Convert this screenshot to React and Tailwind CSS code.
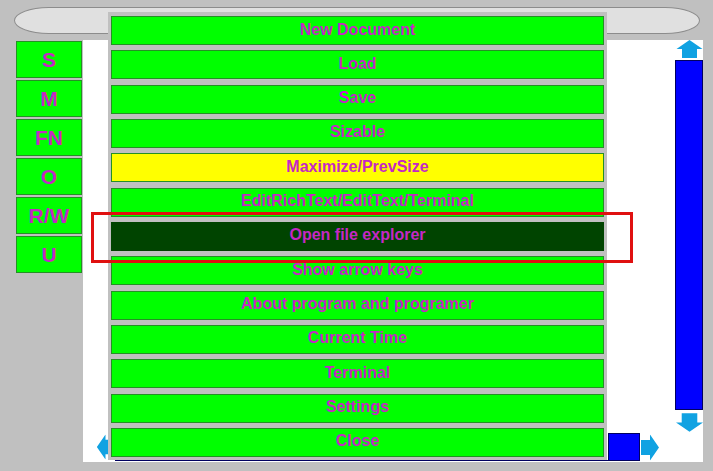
import React from 'react';

const menuItems = [
  { label: 'New Document' },
  { label: 'Load' },
  { label: 'Save' },
  { label: 'Sizable' },
  { label: 'Maximize/PrevSize', tone: 'yellow' },
  { label: 'EditRichText/EditText/Terminal' },
  { label: 'Open file explorer', tone: 'dark' },
  { label: 'Show arrow keys' },
  { label: 'About program and programer' },
  { label: 'Current Time' },
  { label: 'Terminal' },
  { label: 'Settings' },
  { label: 'Close' },
];

const sideKeys = ['S', 'M', 'FN', 'O', 'R/W', 'U'];

function Arrow({ dir, className }) {
  // drawn pointing up, rotated for the other directions
  const rot = { up: 0, right: 90, down: 180, left: 270 }[dir];
  return (
    <svg viewBox="0 0 26 18" className={className} style={{ transform: `rotate(${rot}deg)` }}>
      <path d="M13 0 L26 9 L20.5 9 L20.5 18 L5.5 18 L5.5 9 L0 9 Z" fill="#10a2e2" />
    </svg>
  );
}

function MenuButton({ label, tone }) {
  let cls = 'bg-[#00ff00] border border-[#259025]';
  if (tone === 'yellow') cls = 'bg-[#ffff00] border border-[#259025]';
  if (tone === 'dark') cls = 'bg-[#004400]';
  return (
    <div className={`h-[29px] flex items-center justify-center pb-[2px] text-[16px] font-bold text-[#c428c4] ${cls}`}>
      {label}
    </div>
  );
}

export default function App() {
  return (
    <div
      className="relative w-[713px] h-[471px] overflow-hidden bg-[#c0c0c0]"
      style={{ fontFamily: '"Liberation Sans", Arial, sans-serif' }}
    >
      {/* top title pill */}
      <div className="ml-[14px] mt-[7px] w-[686px] h-[27px] rounded-[36px/14px] bg-[#e0e0e0] border border-[#8c8c8c]" />

      <div className="flex items-start mt-[6px]">
        {/* side keys */}
        <div className="ml-[16px] mt-[1px] w-[66px] flex flex-col gap-[2px]">
          {sideKeys.map((k) => (
            <div
              key={k}
              className="h-[37px] flex items-center justify-center bg-[#00ff00] border border-[#259025] text-[21px] font-bold text-[#c428c4]"
            >
              {k}
            </div>
          ))}
        </div>

        {/* white workspace */}
        <div className="ml-[1px] w-[620px] h-[422px] bg-white flex">
          <div className="flex-1 flex flex-col">
            <div className="flex-1" />
            <div className="h-[28px] mb-[1px] flex items-center">
              <Arrow dir="left" className="ml-[10px] w-[25px] h-[18px]" />
              <div className="ml-[-3px] w-[493px] h-full border-b border-[#000060]" />
              <div className="w-[32px] h-[28px] bg-[#0000ff] border border-[#000060]" />
              <Arrow dir="right" className="ml-[-3px] w-[26px] h-[19px]" />
            </div>
          </div>
          <div className="w-[28px] flex flex-col items-center">
            <Arrow dir="up" className="w-[27px] h-[18px]" />
            <div className="mt-[2px] w-[28px] h-[350px] bg-[#0000ff] border border-[#000060]" />
            <Arrow dir="down" className="mt-[3px] w-[27px] h-[19px]" />
          </div>
        </div>
      </div>

      {/* popup menu */}
      <div className="absolute left-[108px] top-[12px] w-[499px] h-[448px] bg-[#c0c0c0] pt-[4px] px-[3px] flex flex-col gap-[5.33px]">
        {menuItems.map((m) => (
          <MenuButton key={m.label} {...m} />
        ))}
      </div>

      {/* highlight frame */}
      <div className="absolute left-[91px] top-[212px] w-[542px] h-[51px] border-[3px] border-[#e01010]" />
    </div>
  );
}
